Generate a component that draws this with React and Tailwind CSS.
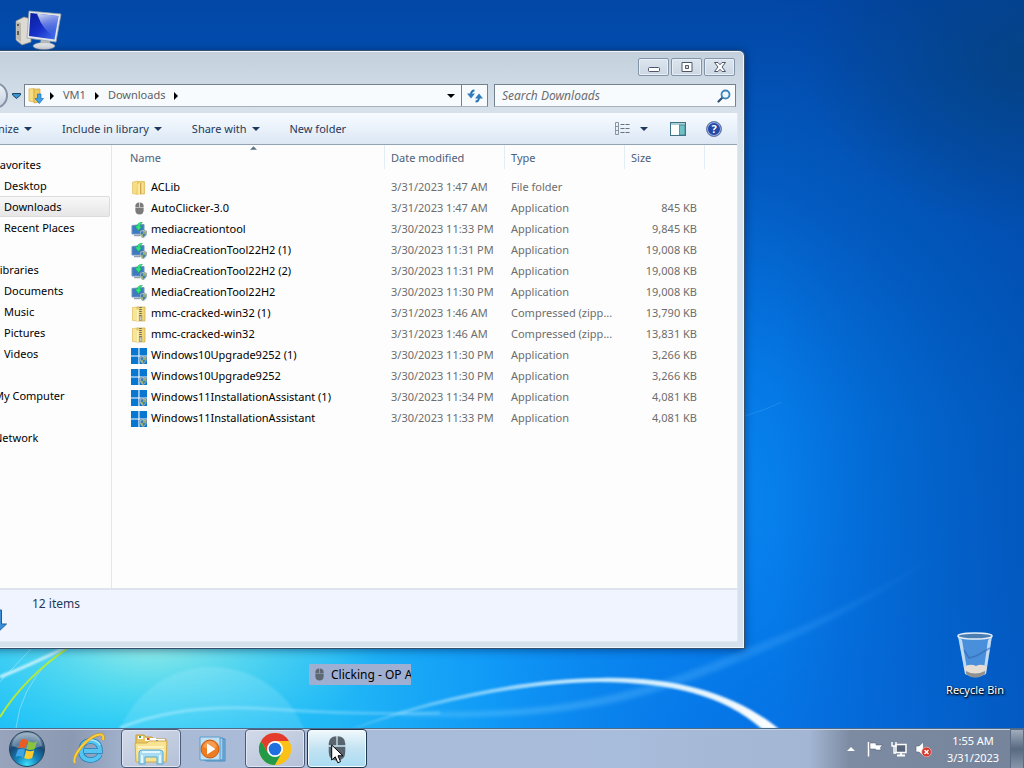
import { useState } from "react";

const files = [
  { name: "ACLib", date: "3/31/2023 1:47 AM", type: "File folder", size: "", icon: "folder" },
  { name: "AutoClicker-3.0", date: "3/31/2023 1:47 AM", type: "Application", size: "845 KB", icon: "mouse" },
  { name: "mediacreationtool", date: "3/30/2023 11:33 PM", type: "Application", size: "9,845 KB", icon: "media" },
  { name: "MediaCreationTool22H2 (1)", date: "3/30/2023 11:31 PM", type: "Application", size: "19,008 KB", icon: "media" },
  { name: "MediaCreationTool22H2 (2)", date: "3/30/2023 11:31 PM", type: "Application", size: "19,008 KB", icon: "media" },
  { name: "MediaCreationTool22H2", date: "3/30/2023 11:30 PM", type: "Application", size: "19,008 KB", icon: "media" },
  { name: "mmc-cracked-win32 (1)", date: "3/31/2023 1:46 AM", type: "Compressed (zipp...", size: "13,790 KB", icon: "zip" },
  { name: "mmc-cracked-win32", date: "3/31/2023 1:46 AM", type: "Compressed (zipp...", size: "13,831 KB", icon: "zip" },
  { name: "Windows10Upgrade9252 (1)", date: "3/30/2023 11:30 PM", type: "Application", size: "3,266 KB", icon: "windows" },
  { name: "Windows10Upgrade9252", date: "3/30/2023 11:30 PM", type: "Application", size: "3,266 KB", icon: "windows" },
  { name: "Windows11InstallationAssistant (1)", date: "3/30/2023 11:34 PM", type: "Application", size: "4,081 KB", icon: "windows" },
  { name: "Windows11InstallationAssistant", date: "3/30/2023 11:33 PM", type: "Application", size: "4,081 KB", icon: "windows" },
];

const places = [
  { title: "Favorites", items: ["Desktop", "Downloads", "Recent Places"] },
  { title: "Libraries", items: ["Documents", "Music", "Pictures", "Videos"] },
  { title: "My Computer", items: [] },
  { title: "Network", items: [] },
];

function Wallpaper() {
  return (
    <svg className="absolute inset-0 w-full h-full" viewBox="0 0 1024 768" preserveAspectRatio="none" aria-hidden="true">
      <defs>
        <linearGradient id="sky" x1="0" y1="0" x2="0" y2="1">
          <stop offset="0" stopColor="#0247a6" />
          <stop offset="0.2" stopColor="#0358bd" />
          <stop offset="0.55" stopColor="#0370db" />
          <stop offset="1" stopColor="#0672e6" />
        </linearGradient>
        <radialGradient id="midGlow" gradientUnits="userSpaceOnUse" cx="0" cy="0" r="1" gradientTransform="translate(640 500) scale(360 340)">
          <stop offset="0" stopColor="#0f93fa" />
          <stop offset="0.5" stopColor="#0680ee" stopOpacity="0.6" />
          <stop offset="1" stopColor="#0670e0" stopOpacity="0" />
        </radialGradient>
        <radialGradient id="cyanGlow" gradientUnits="userSpaceOnUse" cx="0" cy="0" r="1" gradientTransform="translate(110 690) scale(640 420)">
          <stop offset="0" stopColor="#1fcbf8" />
          <stop offset="0.35" stopColor="#22b9f6" />
          <stop offset="0.6" stopColor="#12a0fa" stopOpacity="0.85" />
          <stop offset="1" stopColor="#0b80ee" stopOpacity="0" />
        </radialGradient>
        <radialGradient id="mintGlow" gradientUnits="userSpaceOnUse" cx="0" cy="0" r="1" gradientTransform="translate(150 640) scale(230 110)">
          <stop offset="0" stopColor="#a8f2e2" stopOpacity="0.9" />
          <stop offset="0.5" stopColor="#78e4ea" stopOpacity="0.5" />
          <stop offset="1" stopColor="#5fdcf0" stopOpacity="0" />
        </radialGradient>
        <linearGradient id="rightShade" x1="0" y1="0" x2="1" y2="0">
          <stop offset="0.76" stopColor="#003c98" stopOpacity="0" />
          <stop offset="1" stopColor="#003c98" stopOpacity="0.45" />
        </linearGradient>
        <radialGradient id="cornerHaze" gradientUnits="userSpaceOnUse" cx="0" cy="0" r="1" gradientTransform="translate(1024 60) scale(220 170)">
          <stop offset="0" stopColor="#06427f" stopOpacity="0.8" />
          <stop offset="1" stopColor="#06427f" stopOpacity="0" />
        </radialGradient>
        <linearGradient id="orbEdge" x1="0" y1="0" x2="0" y2="1">
          <stop offset="0" stopColor="#b8f2ff" stopOpacity="0.22" />
          <stop offset="1" stopColor="#a0ecff" stopOpacity="0.08" />
        </linearGradient>
        <linearGradient id="arcFade" gradientUnits="userSpaceOnUse" x1="340" y1="0" x2="780" y2="0">
          <stop offset="0" stopColor="#c8f2ff" stopOpacity="0.1" />
          <stop offset="0.5" stopColor="#d8f4ff" stopOpacity="0.85" />
          <stop offset="1" stopColor="#fff" />
        </linearGradient>
        <linearGradient id="rayFade" gradientUnits="userSpaceOnUse" x1="120" y1="0" x2="960" y2="0">
          <stop offset="0" stopColor="#b0f0ff" stopOpacity="0.6" />
          <stop offset="0.4" stopColor="#8ad8ff" stopOpacity="0.35" />
          <stop offset="0.75" stopColor="#4cb0ff" stopOpacity="0.3" />
          <stop offset="1" stopColor="#4ca8ff" stopOpacity="0" />
        </linearGradient>
        <filter id="soft" x="-10%" y="-30%" width="120%" height="160%">
          <feGaussianBlur stdDeviation="0.8" />
        </filter>
        <filter id="softer" x="-10%" y="-30%" width="120%" height="160%">
          <feGaussianBlur stdDeviation="2" />
        </filter>
      </defs>
      <rect width="1024" height="768" fill="url(#sky)" />
      <rect width="1024" height="768" fill="url(#midGlow)" />
      <rect width="1024" height="768" fill="url(#cyanGlow)" />
      <rect width="1024" height="768" fill="url(#rightShade)" />
      <rect width="1024" height="768" fill="url(#cornerHaze)" />
      <rect width="1024" height="768" fill="url(#mintGlow)" />
      <circle cx="212" cy="766" r="99" fill="url(#orbEdge)" filter="url(#soft)" />
      <path d="M0 677 Q35 663 68 646" stroke="#e4f9ff" strokeWidth="3" fill="none" opacity="0.85" filter="url(#soft)" />
      <path d="M0 682 Q18 662 34 646 M16 728 Q20 690 50 660" stroke="#b8efff" strokeWidth="1" fill="none" opacity="0.5" />
      <path d="M0 717 Q24 678 68 648" stroke="#b4e93c" strokeWidth="2" fill="none" />
      <path d="M120 728 Q180 703 270 709 T440 713" stroke="url(#rayFade)" strokeWidth="3" fill="none" filter="url(#soft)" />
      <path d="M400 712 C560 716 640 694 745 649 Q860 606 950 545 Q860 614 745 659 C640 704 560 722 400 715 Z" fill="url(#rayFade)" filter="url(#softer)" />
      <path d="M352 728 C430 698 520 679 600 678 C675 676 736 694 779 729 L762 729 C722 694 670 683 600 682 C520 683 430 703 358 728 Z" fill="url(#arcFade)" filter="url(#soft)" />
      <path d="M745 416 Q765 410 782 402" stroke="#4aa6f8" strokeWidth="1" fill="none" opacity="0.35" />
    </svg>
  );
}

function Shield() {
  return (
    <g>
      <path d="M9 9 L12 8 L15.500 9 V12 Q15 14.500 12 16 Q9.500 14.500 9 12 Z" fill="#e8ecef" stroke="#6d7b86" strokeWidth="0.6" />
      <path d="M12 9 V12 H9.600 V9.600 Z M12 12 H15 Q14.500 14 12 15.200 Z" fill="#3d7fb5" />
      <path d="M12 9 L15 9.600 V12 H12 Z M9.600 12 H12 V15.200 Q10 14 9.600 12 Z" fill="#8fae6c" />
    </g>
  );
}

function MouseGlyph({ className }) {
  return (
    <svg viewBox="0 0 20 28" className={className} aria-hidden="true">
      <path d="M9.300 0.500 V10.500 H0.800 V8.500 Q1 1 9.300 0.500 Z" fill="currentColor" />
      <path d="M10.700 0.500 V10.500 H19.200 V8.500 Q19 1 10.700 0.500 Z" fill="currentColor" />
      <path d="M0.800 12 H19.200 V18 Q19 27.500 10 27.500 Q1 27.500 0.800 18 Z" fill="currentColor" />
    </svg>
  );
}

function FileIcon({ kind }) {
  if (kind === "mouse") {
    return (
      <span className="flex w-4 h-4 justify-center items-center text-[#7b7b7b]">
        <MouseGlyph className="w-[9px] h-[13px]" />
      </span>
    );
  }
  return (
    <svg viewBox="0 0 16 16" className="w-4 h-4 shrink-0" aria-hidden="true">
      {kind === "folder" && (
        <g>
          <path d="M1.500 2 L7 1 V14.500 L1.500 13.500 Z" fill="#f6dc83" stroke="#e3c063" strokeWidth="0.7" />
          <path d="M7 1.500 H13.500 V14 H6 Z" fill="#f0d170" stroke="#dcb552" strokeWidth="0.7" />
          <path d="M6.500 4 L9.500 2.500 V14 L6.500 15.500 Z" fill="#fbe9a2" />
          <path d="M9.500 3 V14" stroke="#c79a36" strokeWidth="0.8" />
          <path d="M11 3 H12.500 V13 H11 Z" fill="#f8e294" />
        </g>
      )}
      {kind === "zip" && (
        <g>
          <path d="M1.500 1.500 L7 1 V15 L1.500 14.500 Z" fill="#f9e596" stroke="#dfbb5c" strokeWidth="0.7" />
          <path d="M6 1 H14 V15 H6 Z" fill="#efd678" stroke="#cfa948" strokeWidth="0.7" />
          <path d="M5.500 3 L7.500 4 V15.500 L5.500 15 Z" fill="#fdf3c4" />
          <path d="M9.500 1 V11" stroke="#6a6a62" strokeWidth="2.500" strokeDasharray="1 1" />
          <rect x="8.300" y="10" width="2.600" height="4.500" fill="#c6c8c6" stroke="#7d7d7a" strokeWidth="0.5" />
        </g>
      )}
      {kind === "media" && (
        <g>
          <path d="M1 3.500 L13 2.500 V12 L1 12 Z" fill="#3f79c2" stroke="#6f93c0" strokeWidth="1" />
          <path d="M3 13.500 H9" stroke="#8fa0ae" strokeWidth="1.500" />
          <path d="M11.500 0.300 Q6.500 0.300 6.500 4 H4 L7.500 8.800 L11 4.300 H9 Q9 2 11.500 0.300 Z" fill="#2fe57c" stroke="#119a50" strokeWidth="0.5" />
          <Shield />
        </g>
      )}
      {kind === "windows" && (
        <g>
          <path d="M0 0 H7.400 V7.400 H0 Z M8.500 0 H16 V7.400 H8.500 Z M0 8.500 H7.400 V16 H0 Z M8.500 8.500 H16 V16 H8.500 Z" fill="#0877d2" />
          <Shield />
        </g>
      )}
    </svg>
  );
}

function Triangle({ className }) {
  return (
    <svg viewBox="0 0 8 4" className={`w-2 h-1 shrink-0 ${className || ""}`} aria-hidden="true">
      <path d="M0 0 H8 L4 4 Z" fill="currentColor" />
    </svg>
  );
}

function CrumbArrow() {
  return (
    <svg viewBox="0 0 4 8" className="w-1 h-2 shrink-0 text-black" aria-hidden="true">
      <path d="M0 0 L4 4 L0 8 Z" fill="currentColor" />
    </svg>
  );
}

function CaptionButton({ label, children }) {
  return (
    <button
      type="button"
      aria-label={label}
      className="w-[31px] h-[18px] flex items-center justify-center rounded-xs border border-[#8494a8] bg-linear-to-b from-[#dde6ee] to-[#cbd7e3] shadow-[inset_0_0_0_1px_#e8eff6]"
    >
      <svg viewBox="0 0 14 12" className="w-[14px] h-3" fill="#fff" stroke="#4d566b" aria-hidden="true">
        {children}
      </svg>
    </button>
  );
}

function AddressBar() {
  const [query, setQuery] = useState("");

  return (
    <div className="flex items-center h-[23px] pl-[55px] pr-0.5">
      <button type="button" aria-label="Forward" className="w-[27px] h-[27px] shrink-0 rounded-full border-2 border-[#8492a3] bg-linear-to-b from-[#eef3f8] to-[#c6d2df]" />
      <button type="button" aria-label="Recent pages" className="w-4 h-5 shrink-0 flex items-center justify-center">
        <svg viewBox="0 0 9 6" className="w-[9px] h-[6px]" aria-hidden="true">
          <path d="M0.500 0.500 H8.500 V2 L4.500 5.500 L0.500 2 Z" fill="#3497d0" stroke="#20415f" />
        </svg>
      </button>
      <div className="flex-1 flex h-full border border-[#74818f] border-b-[#a5b1bd] bg-[#f8fbfd]">
        <div className="flex-1 flex items-center pl-[3px] text-[#5c5f66]">
          <svg viewBox="0 0 16 16" className="w-4 h-4 mr-1.5 shrink-0" aria-hidden="true">
            <path d="M1 1 L6 0.500 V14 L1 13 Z" fill="#f7dd82" stroke="#d9b04a" strokeWidth="0.7" />
            <path d="M6 1 H12 V14 L6 15 Z" fill="#edca60" stroke="#cfa53d" strokeWidth="0.7" />
            <path d="M9.500 6 H13 V10.500 H15.500 L11.300 15.500 L7 10.500 H9.500 Z" fill="#3ea0e6" stroke="#1d71b8" strokeWidth="0.7" />
          </svg>
          <div className="flex items-center gap-[9px]">
            <CrumbArrow />
            <a href="#vm1">VM1</a>
            <CrumbArrow />
            <a href="#downloads">Downloads</a>
            <CrumbArrow />
          </div>
        </div>
        <button type="button" aria-label="Previous locations" className="w-5 flex items-center justify-center text-black">
          <Triangle />
        </button>
        <button type="button" aria-label="Refresh" className="w-[26px] flex items-center justify-center border-l border-[#74818f]">
          <svg viewBox="0 0 16 14" className="w-4 h-[14px]" aria-hidden="true">
            <path d="M7.500 1.500 Q4 1.500 4 6 M8.500 12.500 Q12 12.500 12 8" stroke="#2874b4" strokeWidth="2" fill="none" />
            <path d="M0 4.500 H8 L4 9.500 Z M8 9.500 L12 4.500 L16 9.500 Z" fill="#2f7cc0" />
          </svg>
        </button>
      </div>
      <div className="flex items-center h-full w-[242px] ml-1.5 border border-[#74818f] border-b-[#a5b1bd] bg-[#f8fbfd] pl-[7px] pr-1">
        <input
          type="text"
          aria-label="Search Downloads"
          value={query}
          onChange={(e) => setQuery(e.target.value)}
          placeholder="Search Downloads"
          className="flex-1 min-w-0 text-xs bg-transparent focus:outline-none placeholder:italic placeholder:text-[#6b6d70]"
        />
        <button type="button" aria-label="Search">
          <svg viewBox="0 0 14 14" className="w-[14px] h-[14px]" fill="none" aria-hidden="true">
            <path d="M6 8 L1.500 12.500" stroke="#2f4f74" strokeWidth="2.200" strokeLinecap="round" />
            <circle cx="8.500" cy="5.500" r="4" stroke="#3c84ba" strokeWidth="1.800" fill="#edf7fd" />
          </svg>
        </button>
      </div>
    </div>
  );
}

function CommandBar() {
  return (
    <div className="flex items-center h-8 pl-[45px] pr-[15px] border-t border-b border-t-[#f8fbfe] border-b-[#93a3b5] bg-linear-to-b from-[#f7fbff] via-[#e9f1fa] to-[#dce7f4] text-[#1e395b]">
      <button type="button" className="flex items-center gap-[5px]">Organize <Triangle /></button>
      <button type="button" className="flex items-center gap-[5px] ml-[30px]">Include in library <Triangle /></button>
      <button type="button" className="flex items-center gap-[5px] ml-[30px]">Share with <Triangle /></button>
      <button type="button" className="ml-[30px]">New folder</button>
      <div className="flex-1" />
      <button type="button" aria-label="Change your view">
        <svg viewBox="0 0 16 14" className="w-4 h-[14px]" fill="none" aria-hidden="true">
          <path d="M0.500 0.500 H3.500 V12.500 H0.500 Z M0.500 4.500 H3.500 M0.500 8.500 H3.500" stroke="#8894a0" />
          <path d="M5.500 2.500 H15.500 M5.500 6.500 H15.500 M5.500 10.500 H15.500" stroke="#66737f" strokeDasharray="4 1" />
        </svg>
      </button>
      <button type="button" aria-label="More views" className="ml-[9px] w-2">
        <Triangle />
      </button>
      <button type="button" aria-label="Show the preview pane" className="ml-[22px]">
        <svg viewBox="0 0 16 14" className="w-4 h-[14px]" aria-hidden="true">
          <rect x="0.500" y="0.500" width="15" height="13" fill="#fff" stroke="#3f7285" />
          <rect x="1" y="1" width="14" height="2" fill="#a9cfd6" />
          <rect x="9.500" y="3" width="5.500" height="10" fill="#6ec2c7" stroke="#3f7285" strokeWidth="0.7" />
        </svg>
      </button>
      <button type="button" aria-label="Get help" className="ml-5 w-4 h-4 rounded-full border border-[#6d7ca8] bg-[#2448a5] shadow-[inset_0_0_0_1px_#9db4e4] flex items-center justify-center text-white text-[11px] leading-3 font-bold">
        ?
      </button>
    </div>
  );
}

function Sidebar({ current, onSelect }) {
  return (
    <nav className="w-[185px] shrink-0 pt-[9px] border-r border-[#dfe7f0] text-black">
      {places.map((group) => (
        <div key={group.title} className="mb-[21px]">
          <a href={`#${group.title}`} className="block h-[21px] leading-[21px] pl-[67px]">{group.title}</a>
          {group.items.map((item) => (
            <button
              key={item}
              type="button"
              onClick={() => onSelect(item)}
              className={`block w-[183px] h-[21px] pl-[76px] text-left border rounded-xs leading-[19px] ${
                item === current ? "border-[#dcdcdc] bg-linear-to-b from-[#f8f8f8] to-[#e6e6e6]" : "border-transparent"
              }`}
            >
              {item}
            </button>
          ))}
        </div>
      ))}
    </nav>
  );
}

function FileTable() {
  return (
    <div className="flex-1 relative">
      <svg viewBox="0 0 8 4" className="absolute left-[138px] top-px w-[7px] h-1" aria-hidden="true">
        <path d="M0 4 L4 0 L8 4 Z" fill="#5d7488" />
      </svg>
      <table className="table-fixed w-full border-collapse text-[#6d6d6d]">
        <colgroup>
          <col className="w-[273px]" />
          <col className="w-[120px]" />
          <col className="w-[120px]" />
          <col className="w-[80px]" />
          <col />
        </colgroup>
        <thead>
          <tr className="h-8 text-left text-[#4c607a]">
            {["Name", "Date modified", "Type", "Size"].map((title, i) => (
              <th key={title} scope="col" className="p-0 font-normal align-top">
                <div className={`h-6 leading-[25px] border-r border-[#e3edf6] ${i === 0 ? "pl-[18px]" : "pl-[6px]"}`}>{title}</div>
              </th>
            ))}
            <td />
          </tr>
        </thead>
        <tbody>
          {files.map((file) => (
            <tr key={file.name} className="h-[21px] whitespace-nowrap">
              <td className="p-0 text-black">
                <div className="flex items-center gap-1 pl-[19px]">
                  <FileIcon kind={file.icon} />
                  <span>{file.name}</span>
                </div>
              </td>
              <td className="p-0 pl-[6px]">{file.date}</td>
              <td className="p-0 pl-[6px]">{file.type}</td>
              <td className="p-0 pr-2 text-right">{file.size}</td>
              <td />
            </tr>
          ))}
        </tbody>
      </table>
    </div>
  );
}

function ExplorerWindow() {
  const [current, setCurrent] = useState("Downloads");

  return (
    <section className="absolute -left-[81px] right-[279px] top-[50px] bottom-[79px] flex flex-col px-[6px] pb-[6px] rounded-t-md border border-[#36516e] bg-linear-to-b from-[#c3d0dc] via-[#d6e1eb] via-10% to-[#d5e2ee] shadow-[inset_0_0_0_1px_#eef5fb,0_1px_8px_rgba(0,20,60,0.5)]">
      <div className="flex justify-end gap-0.5 pt-[7px] pr-[3px] h-[33px]">
        <CaptionButton label="Minimize">
          <rect x="1.500" y="6.500" width="11" height="4" rx="1" />
        </CaptionButton>
        <CaptionButton label="Maximize">
          <path d="M2 1.500 H12 V10.500 H2 Z M5.500 4.500 H8.500 V7.500 H5.500 Z" fillRule="evenodd" />
        </CaptionButton>
        <CaptionButton label="Close">
          <path d="M1.500 1.500 H5 L7 3.700 L9 1.500 H12.500 L9 6 L12.500 10.500 H9 L7 8.300 L5 10.500 H1.500 L5 6 Z" />
        </CaptionButton>
      </div>
      <AddressBar />
      <div className="flex-1 flex flex-col mt-1.5 border border-t-0 border-[#dfe9f2]">
        <CommandBar />
        <div className="flex-1 flex bg-[#fdfdfe]">
          <Sidebar current={current} onSelect={setCurrent} />
          <FileTable />
        </div>
        <footer className="h-[53px] flex border-t-2 border-[#dde4ef] bg-[#f0f4fe] text-[#1e395b] text-xs">
          <svg viewBox="0 0 40 48" className="w-10 h-12 ml-10 mt-0.5" aria-hidden="true">
            <path d="M20 18 H34.500 V32 H39.500 L27 44 L14 32 H20 Z" fill="#3c8fd6" stroke="#1b5f9f" />
          </svg>
          <p className="pl-[25px] pt-[6px]">12 items</p>
        </footer>
      </div>
    </section>
  );
}

function ComputerIcon() {
  return (
    <svg viewBox="0 0 48 42" className="absolute left-[15px] top-[9px] w-12 h-[42px]" role="img" aria-label="My Computer">
      <defs>
        <linearGradient id="screen" x1="0" y1="0" x2="1" y2="1">
          <stop offset="0" stopColor="#0a1d9c" />
          <stop offset="0.5" stopColor="#1630c8" />
          <stop offset="1" stopColor="#4a78f0" />
        </linearGradient>
        <linearGradient id="glare" x1="0" y1="0" x2="0.3" y2="1">
          <stop offset="0" stopColor="#f2f7ff" stopOpacity="0.9" />
          <stop offset="1" stopColor="#7fa4ff" stopOpacity="0.1" />
        </linearGradient>
      </defs>
      <path d="M1 12 L9 8 L16 10 V33 L7 36 L1 31 Z" fill="#dcdad2" stroke="#8d8d88" strokeWidth="0.7" />
      <path d="M2 13 L6 14 V33 L2 30 Z" fill="#b8b6ad" />
      <path d="M3 15 V17 M3 22 V26" stroke="#403f3a" strokeWidth="1.500" />
      <path d="M26 30 H34 L36 36 H25 Z" fill="#b9bec2" />
      <ellipse cx="29" cy="37" rx="11" ry="3.500" fill="#e3e6e8" stroke="#999" strokeWidth="0.5" />
      <path d="M14 2 L46 5 L41 33 L12 29 Z" fill="#e4e8ea" stroke="#98a1a9" strokeWidth="0.8" />
      <path d="M15.500 4 L43.500 7 L39.500 30.500 L14 27 Z" fill="url(#screen)" />
      <path d="M22 4.700 L43.500 7 L40 28 Q28 22 22 4.700 Z" fill="url(#glare)" />
    </svg>
  );
}

function RecycleBin() {
  return (
    <a href="#recycle-bin" className="absolute right-3 bottom-[30px] w-[74px] flex flex-col items-center text-white">
      <svg viewBox="0 0 38 48" className="w-[38px] h-12" aria-hidden="true">
        <path d="M2 4 L36 4 L30 42 Q19 49 9 42 Z" fill="#8fc0ee" opacity="0.5" />
        <path d="M2 4 L6 8 L12 43 L9 42 Z M36 4 L32 8 L27 43 L30 42 Z" fill="#e5f3fc" opacity="0.75" />
        <path d="M8 35 Q14 31 20 34 Q26 31 31 35 L29 42 Q19 48 10 42 Z" fill="#e6ddd4" />
        <path d="M10 39 Q19 44 29 39 L29 42 Q19 49 10 42 Z" fill="#8f908f" />
        <path d="M8 18 L13 26 L20 24 L34 16" stroke="#2f68ad" strokeWidth="1.500" fill="none" opacity="0.6" />
        <ellipse cx="19" cy="4" rx="17" ry="3" fill="#4a7eb3" stroke="#e3eef7" strokeWidth="1.500" />
      </svg>
      <span className="whitespace-nowrap leading-4 mt-0.5 [text-shadow:0_1px_2px_#000,1px_1px_2px_#000]">Recycle Bin</span>
    </a>
  );
}

function StartOrb() {
  return (
    <svg viewBox="0 0 38 38" className="w-[38px] h-[38px]" aria-hidden="true">
      <defs>
        <radialGradient id="orb" cx="0.5" cy="0.95" r="0.9">
          <stop offset="0" stopColor="#3fe0fb" />
          <stop offset="0.35" stopColor="#1485bd" />
          <stop offset="0.7" stopColor="#174974" />
          <stop offset="1" stopColor="#7895ae" />
        </radialGradient>
      </defs>
      <circle cx="19" cy="19" r="17.500" fill="url(#orb)" stroke="#2a435c" />
      <path d="M4 16 Q6 3 19 3 Q32 3 34 16 Q19 22 4 16 Z" fill="#fff" opacity="0.3" />
      <path d="M13 10 Q16 8 19.500 10.500 L17.500 18.500 Q14 16.500 10 18.500 Z" fill="#ee5a24" />
      <path d="M20.500 11 Q24 13.500 29 11.500 L26.700 19 Q22.500 21 18.500 19 Z" fill="#8ac43f" />
      <path d="M9.700 19.700 Q13.500 17.700 17 19.700 L15 27.500 Q11.500 25 7.500 27 Z" fill="#3ea4e6" />
      <path d="M18.200 20.200 Q22 22.500 26.200 20.200 L24.200 28 Q20 30 16.200 28 Z" fill="#ffcc2f" />
    </svg>
  );
}

function ExplorerLogo() {
  return (
    <svg viewBox="0 0 34 32" className="w-[34px] h-8" aria-hidden="true">
      <path d="M2 2 H10 L12 4 H18 L20 6 H32 V28 H2 Z" fill="#e9c763" stroke="#c79b38" />
      <path d="M4 3 H9 V6 H4 Z M11 5 H22 V8 H11 Z M20 6 H31 V9 H20 Z" fill="#fff" />
      <path d="M5 3 H7 V5 H5 Z" fill="#3ea447" />
      <path d="M13 5 H15.500 V7 H13 Z" fill="#d6452c" />
      <path d="M22 7 H24 V8.500 H22 Z" fill="#3579bd" />
      <path d="M1 10 H13 L15 8 H33 L32 29 H2 Z" fill="#f8e393" stroke="#d3ab49" />
      <path d="M4 14 H30 M4 17 H30" stroke="#fdf2bd" strokeWidth="2" />
      <path d="M5 31 V20 Q5 17 8 17 H26 Q29 17 29 20 V31 H23 V24 H11 V31 Z" fill="#a7dcf3" stroke="#5ba8ce" />
      <path d="M8 19 H26 M8 22 V30 M26 22 V30" stroke="#e2f6ff" strokeWidth="2" />
    </svg>
  );
}

function IeLogo() {
  return (
    <svg viewBox="0 0 32 32" className="w-8 h-8" fill="none" aria-hidden="true">
      <path d="M27 21.500 Q24 27 17.500 27 Q8 26.500 8 17.500 Q8.500 8.500 17.500 8 Q27 8.500 27 18 H11" stroke="#1f7fbf" strokeWidth="5.500" />
      <path d="M27 21.500 Q24 27 17.500 27 Q8 26.500 8 17.500 Q8.500 8.500 17.500 8 Q27 8.500 27 18 H11" stroke="#55c4ef" strokeWidth="4" />
      <path d="M9 12 Q12 7 17.500 7 Q24 7 27 12" stroke="#a9e5fa" strokeWidth="1.500" />
      <path d="M2 30 Q-1 25 9 13 Q20 1 28 1.500 Q31 2 30 7" stroke="#c98f14" strokeWidth="3" />
      <path d="M2 30 Q-1 25 9 13 Q20 1 28 1.500 Q31 2 30 7" stroke="#fad03e" strokeWidth="2" />
    </svg>
  );
}

function MediaPlayerLogo() {
  return (
    <svg viewBox="0 0 28 26" className="w-7 h-[26px]" aria-hidden="true">
      <path d="M7 3 H26 V25 H7 Z" fill="#77b6e3" stroke="#4c8cc0" />
      <path d="M4 2 H24 V24 H4 Z" fill="#9dcdef" stroke="#4c8cc0" />
      <path d="M1 1 H21 V24 H1 Z" fill="#c0e0f5" stroke="#5b9ccb" />
      <circle cx="11" cy="13" r="9" fill="#ee7c22" stroke="#c65b10" />
      <path d="M4 11 Q6 5 11 5 Q16 5 18 11 Q11 14 4 11 Z" fill="#f9b271" opacity="0.6" />
      <path d="M8 7.500 L16.500 13 L8 18.500 Z" fill="#fff" />
    </svg>
  );
}

function ChromeLogo() {
  return (
    <svg viewBox="0 0 32 32" className="w-8 h-8" aria-hidden="true">
      <circle cx="16" cy="16" r="16" fill="#fbc116" />
      <path d="M2.140 8 A16 16 0 0 0 16 32 L22.930 20 L9.070 20 Z" fill="#229a48" />
      <path d="M16 8 H29.860 A16 16 0 0 1 16 32 L22.930 20 Z" fill="#fbc116" />
      <path d="M16 8 H29.860 A16 16 0 0 0 2.140 8 L9.070 20 Z" fill="#e33b2e" />
      <circle cx="16" cy="16" r="8" fill="#fff" />
      <circle cx="16" cy="16" r="6.300" fill="#1f6fe0" />
    </svg>
  );
}

function TaskButton({ label, state, children }) {
  return (
    <button
      type="button"
      aria-label={label}
      className={`w-15 h-full flex items-center justify-center rounded-sm border ${
        state === "active"
          ? "border-[#1d3850] bg-linear-to-b from-[#f1f9fd] via-[#c3e3f2] to-[#a9dcf3] shadow-[inset_0_0_0_1px_#f4fbff]"
          : state === "open"
            ? "border-[#4c5b78] bg-linear-to-br from-[#d3dbe9] to-[#b3c0d7] shadow-[inset_0_0_0_1px_#dfe6f1]"
            : "border-transparent"
      }`}
    >
      {children}
    </button>
  );
}

function Tray() {
  return (
    <div className="flex items-center text-white">
      <button type="button" aria-label="Show hidden icons">
        <svg viewBox="0 0 8 4" className="w-2 h-1" aria-hidden="true">
          <path d="M0 4 L4 0 L8 4 Z" fill="#fff" />
        </svg>
      </button>
      <button type="button" aria-label="Action Center" className="ml-3">
        <svg viewBox="0 0 16 16" className="w-4 h-4" aria-hidden="true">
          <path d="M1.500 1 V15.500" stroke="#fff" strokeWidth="1.500" />
          <path d="M3 2 H9 V4 H15.500 L13.500 6.500 L14 9 H8.500 V8 H3 Z" fill="#fff" stroke="#4b566b" strokeWidth="0.5" />
        </svg>
      </button>
      <button type="button" aria-label="Network" className="ml-2">
        <svg viewBox="0 0 16 16" className="w-4 h-4" fill="none" aria-hidden="true">
          <path d="M5 3.500 H15 V11.500 H5 Z" fill="#58667c" stroke="#fff" strokeWidth="1.500" />
          <path d="M6 14.500 H14 M10 11.500 V14" stroke="#fff" strokeWidth="1.800" />
          <path d="M1 1 V5 H5 V1 M3 5 V12 H5" stroke="#fff" strokeWidth="1.400" />
        </svg>
      </button>
      <button type="button" aria-label="Volume, muted" className="ml-2">
        <svg viewBox="0 0 17 16" className="w-[17px] h-4" aria-hidden="true">
          <path d="M1 5 H4 L8.500 1 V15 L4 11 H1 Z" fill="#fff" stroke="#59657a" strokeWidth="0.6" />
          <circle cx="11.500" cy="11" r="4.800" fill="#d5362c" stroke="#f2bdb8" strokeWidth="0.7" />
          <path d="M9.500 9 L13.500 13 M13.500 9 L9.500 13" stroke="#fff" strokeWidth="1.500" />
        </svg>
      </button>
      <time className="w-[74px] ml-1 text-center leading-[17px]">
        1:55 AM
        <br />
        3/31/2023
      </time>
      <button type="button" aria-label="Show desktop" className="w-[14px] h-10 border border-[#5b6c84] bg-linear-to-b from-[#a1adbd] via-[#586a81] to-[#8796aa]" />
    </div>
  );
}

function Taskbar() {
  return (
    <footer className="relative h-10 flex justify-between border-t border-[#4b6a8c] bg-[linear-gradient(90deg,#97a4bc_0,#8b99b2_7%,#a9bad6_14%,#a8bddb_60%,#a3b6d3_79%,#7d8ba2_83%,#75849b_100%)] shadow-[inset_0_1px_0_#c8d5e6]">
      <div className="flex gap-0.5 h-full">
        <button type="button" aria-label="Start" className="w-[57px] pl-2">
          <StartOrb />
        </button>
        <TaskButton label="Internet Explorer"><IeLogo /></TaskButton>
        <TaskButton label="Windows Explorer" state="open"><ExplorerLogo /></TaskButton>
        <TaskButton label="Windows Media Player"><MediaPlayerLogo /></TaskButton>
        <TaskButton label="Google Chrome" state="open"><ChromeLogo /></TaskButton>
        <TaskButton label="OP Auto Clicker" state="active">
          <span className="text-[#58656e]"><MouseGlyph className="w-[18px] h-[27px]" /></span>
        </TaskButton>
      </div>
      <Tray />
      {/* POINTER */}
      <svg viewBox="0 0 13 20" className="absolute left-[331px] top-[15px] w-[13px] h-5" aria-hidden="true">
        <path d="M0.700 1 V16 L4.300 12.800 L6.800 18.800 L9.500 17.600 L7 11.800 H12 Z" fill="#fff" stroke="#000" />
      </svg>
    </footer>
  );
}

export default function App() {
  return (
    <div className="relative min-h-screen flex flex-col overflow-hidden text-[11px] select-none font-['Noto_Sans','Open_Sans',sans-serif]">
      <Wallpaper />
      <main className="relative flex-1">
        <ComputerIcon />
        <RecycleBin />
        <ExplorerWindow />
        {/* FADING WINDOW TITLE */}
        <div className="absolute left-[309px] bottom-[43px] w-[102px] h-[21px] flex items-center gap-[7px] pl-[6px] overflow-hidden whitespace-nowrap bg-[#9fafd2] text-black text-xs">
          <span className="text-[#5e6872] shrink-0"><MouseGlyph className="w-[9px] h-[13px]" /></span>
          <span>Clicking - OP Auto Clicker</span>
        </div>
      </main>
      <Taskbar />
    </div>
  );
}
